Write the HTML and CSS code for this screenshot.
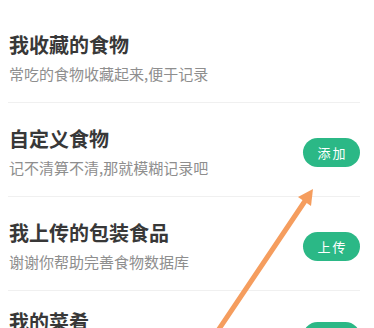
FILE: index.html
```html
<!DOCTYPE html>
<html lang="zh-CN">
<head>
    <meta charset="UTF-8">
    <title>食物管理</title>
    <link rel="stylesheet" href="styles.css">
</head>
<body>
    <div class="list">
        <div class="row">
            <div class="info">
                <div class="title">我收藏的食物</div>
                <div class="desc">常吃的食物收藏起来,便于记录</div>
            </div>
        </div>
        <div class="row">
            <div class="info">
                <div class="title">自定义食物</div>
                <div class="desc">记不清算不清,那就模糊记录吧</div>
            </div>
            <div class="btn">添加</div>
        </div>
        <div class="row">
            <div class="info">
                <div class="title">我上传的包装食品</div>
                <div class="desc">谢谢你帮助完善食物数据库</div>
            </div>
            <div class="btn">上传</div>
        </div>
        <div class="row last">
            <div class="info">
                <div class="title">我的菜肴</div>
            </div>
            <div class="btn"></div>
        </div>
    </div>

    <!-- 指示箭头 -->
    <svg class="arrow" width="374" height="328" viewBox="0 0 374 328">
        <line x1="217" y1="332" x2="305" y2="201" stroke="#f59d5e" stroke-width="5" stroke-linecap="round"/>
        <polygon points="313,189 311,206 298,197" fill="#f59d5e"/>
    </svg>
</body>
</html>
```

FILE: styles.css
```css
* {
    margin: 0;
    padding: 0;
    box-sizing: border-box;
}

body {
    position: relative;
    width: 374px;
    height: 328px;
    overflow: hidden;
    background: #fff;
    font-family: "Noto Sans CJK SC", "Noto Sans", sans-serif;
}

.list {
    margin: 0 14px 0 8px;
    padding-top: 9px;
}

.row {
    display: flex;
    align-items: center;
    justify-content: space-between;
    padding: 24px 0 18px 1px;
    border-bottom: 1px solid #f0f0f0;
}

.row.last {
    padding-top: 19px;
    align-items: flex-start;
}

.row.last .btn {
    margin-top: 12px;
}

.title {
    font-size: 20px;
    line-height: 24px;
    font-weight: 700;
    color: #383838;
    margin-bottom: 7px;
}

.desc {
    font-size: 15px;
    line-height: 20px;
    color: #8e8e8e;
}

.btn {
    width: 57px;
    height: 29px;
    border-radius: 15px;
    background: #2bb886;
    color: #fff;
    font-size: 13px;
    line-height: 29px;
    text-align: center;
    letter-spacing: 2px;
    text-indent: 2px;
}

.arrow {
    position: absolute;
    top: 0;
    left: 0;
    pointer-events: none;
}
```
